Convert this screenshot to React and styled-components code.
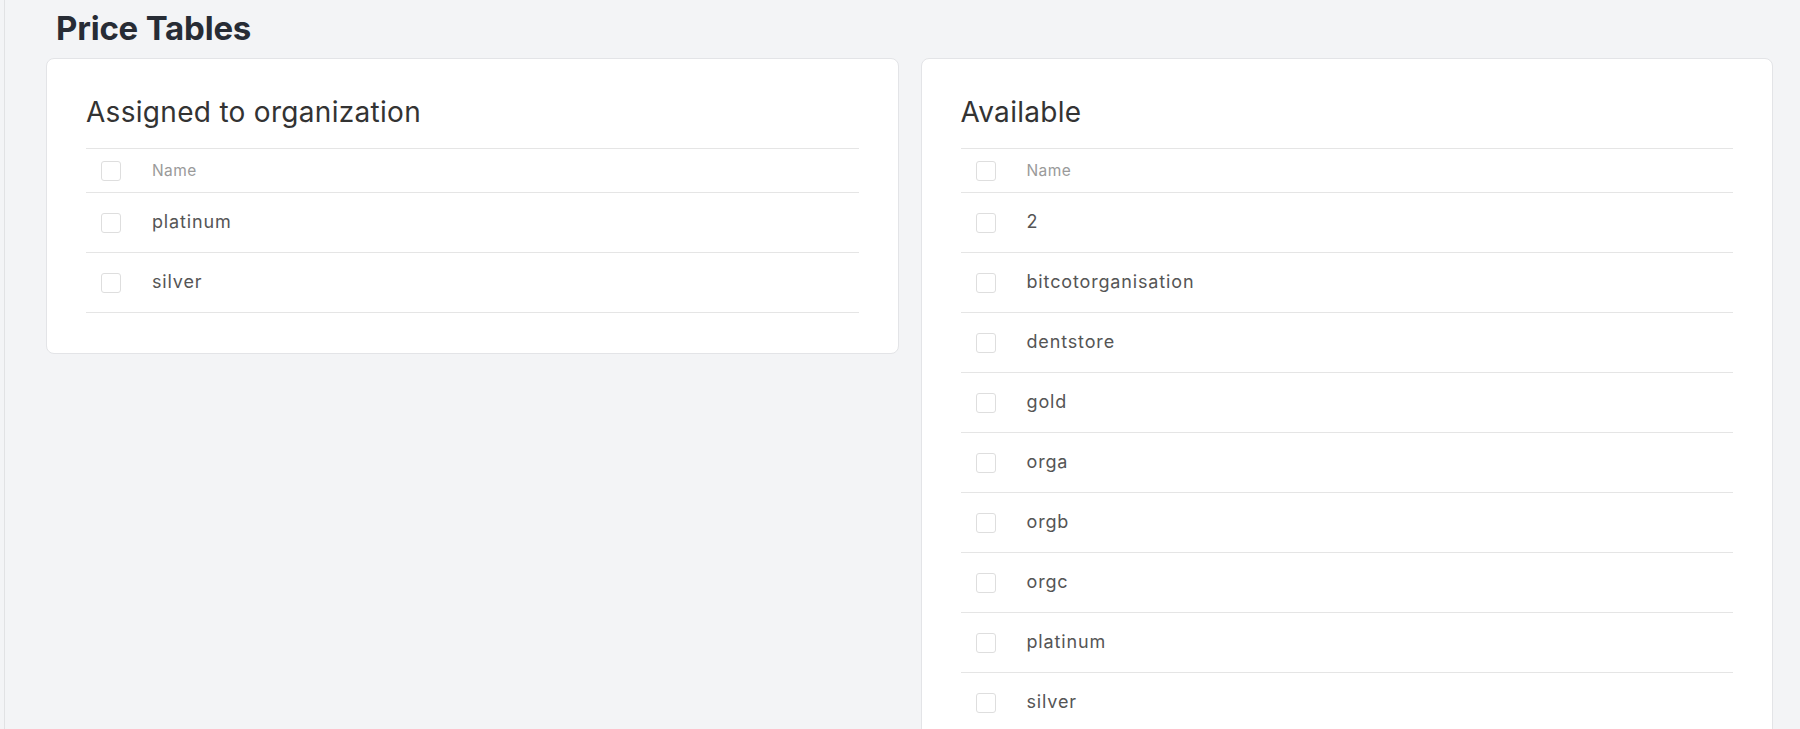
import React from "react";
import styled, { createGlobalStyle } from "styled-components";

const GlobalStyle = createGlobalStyle`
  html, body {
    margin: 0;
    padding: 0;
    background: #f3f4f6;
    font-family: Inter, "Noto Sans", "Liberation Sans", sans-serif;
  }
  * { box-sizing: border-box; }
`;

const Page = styled.div`
  margin-left: 4px;
  border-left: 1px solid #e1e2e4;
  min-height: 729px;
  padding: 8px 27px 0 41px;
`;

const Title = styled.h1`
  margin: 0 0 10px;
  padding-left: 10px;
  font-size: 33px;
  line-height: 40px;
  font-weight: 700;
  color: #272c35;
  letter-spacing: -0.2px;
`;

const Columns = styled.div`
  display: grid;
  grid-template-columns: 1fr 1fr;
  gap: 22px;
  align-items: start;
`;

const Card = styled.section`
  background: #fff;
  border: 1px solid #e3e4e7;
  border-radius: 8px;
  padding: 36px 39px 40px;
`;

const CardTitle = styled.h2`
  margin: 0 0 19px;
  font-size: 28px;
  line-height: 34px;
  font-weight: 400;
  color: #333;
  letter-spacing: 0.3px;
`;

const Table = styled.div`
  border-top: 1px solid #e5e5e5;
`;

const Row = styled.div`
  display: flex;
  align-items: center;
  height: ${(p) => (p.$head ? "44px" : "60px")};
  border-bottom: 1px solid #e5e5e5;
`;

const Check = styled.input.attrs({ type: "checkbox" })`
  appearance: none;
  margin: 0 0 0 15px;
  width: 20px;
  height: 20px;
  border: 1.5px solid #dedede;
  border-radius: 3px;
  background: #fff;
  flex: none;
`;

const Cell = styled.span`
  margin-left: 31px;
  margin-top: ${(p) => (p.$head ? "0" : "-2px")};
  font-size: ${(p) => (p.$head ? "15.5px" : "18px")};
  letter-spacing: ${(p) => (p.$head ? "0.4px" : "0.85px")};
  color: ${(p) => (p.$head ? "#9a9a9a" : "#555")};
`;

function PriceTable({ title, items }) {
  return (
    <Card>
      <CardTitle>{title}</CardTitle>
      <Table>
        <Row $head>
          <Check />
          <Cell $head>Name</Cell>
        </Row>
        {items.map((it) => (
          <Row key={it}>
            <Check />
            <Cell>{it}</Cell>
          </Row>
        ))}
      </Table>
    </Card>
  );
}

export default function App() {
  return (
    <>
      <GlobalStyle />
      <Page>
        <Title>Price Tables</Title>
        <Columns>
          <PriceTable title="Assigned to organization" items={["platinum", "silver"]} />
          <PriceTable
            title="Available"
            items={["2", "bitcotorganisation", "dentstore", "gold", "orga", "orgb", "orgc", "platinum", "silver"]}
          />
        </Columns>
      </Page>
    </>
  );
}
